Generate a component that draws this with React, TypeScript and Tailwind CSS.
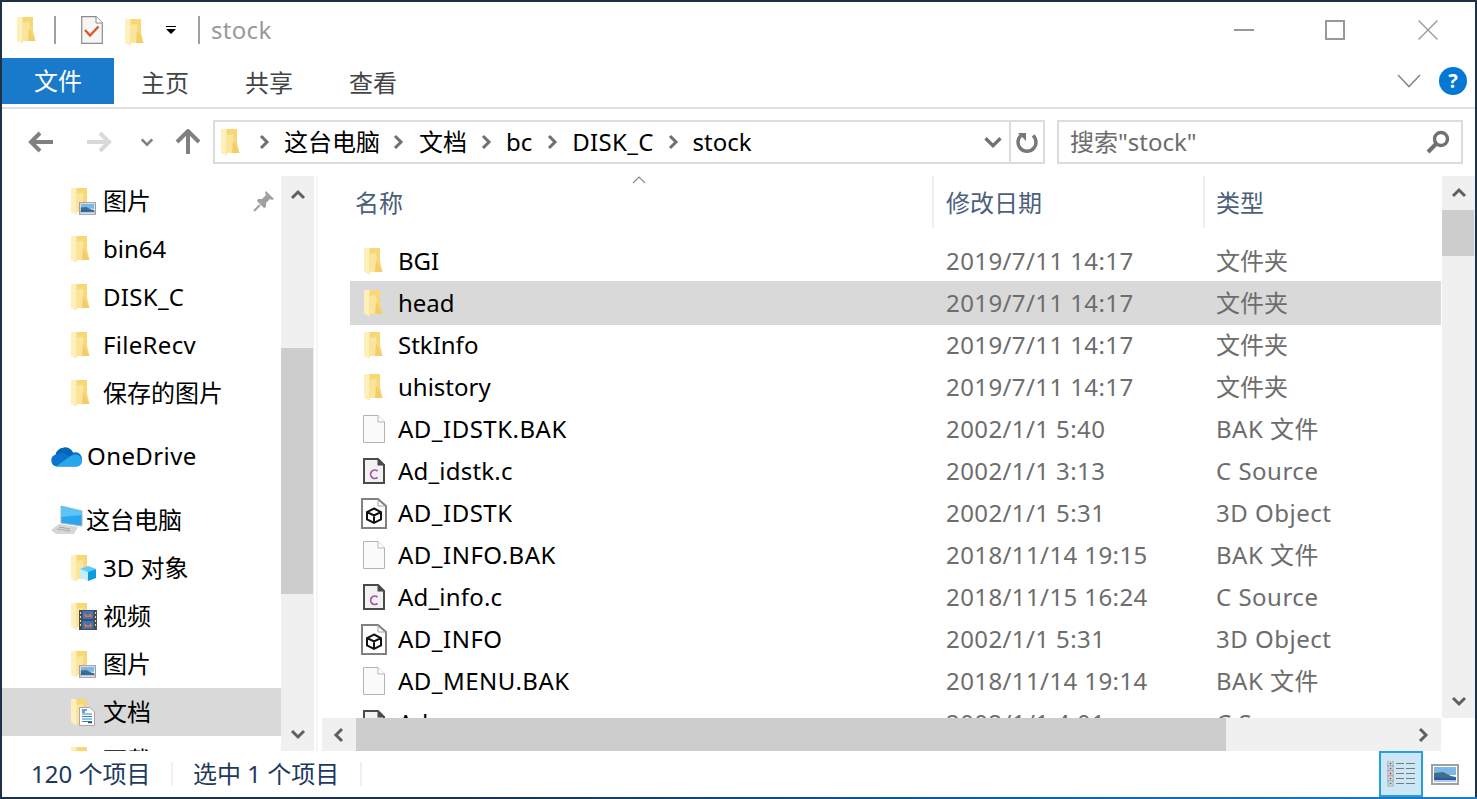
import React from "react";

const F = "[font-family:'Noto_Sans','Noto_Sans_CJK_SC',sans-serif]";

function Folder({ className = "" }: { className?: string }) {
  return (
    <svg width="19" height="28" viewBox="0 0 19 28" className={`shrink-0 ${className}`}>
      <path d="M0 1 H16 V14 L18.5 25 H6 V27.5 L0 24.5 Z" fill="#f8d876" />
      <path d="M0 1 H5.5 L5.5 25 L6 27.5 L0 24.5 Z" fill="#fdf0bd" />
      <path d="M5.5 7 L12 6 L15 25 H5.5 Z" fill="#fbe59d" />
      <path d="M12 12 L18.5 25 H11 Z" fill="#f4cd68" />
    </svg>
  );
}

function Chev({ dir, color = "#606060", w = 16, sw = 3 }: { dir: "up" | "down" | "left" | "right"; color?: string; w?: number; sw?: number }) {
  const d = {
    up: "M2 11 L8 5 L14 11",
    down: "M2 5 L8 11 L14 5",
    left: "M11 2 L5 8 L11 14",
    right: "M5 2 L11 8 L5 14",
  }[dir];
  return (
    <svg width={w} height={w} viewBox="0 0 16 16" className="shrink-0">
      <path d={d} fill="none" stroke={color} strokeWidth={sw} />
    </svg>
  );
}

function Landscape({ w = 17, h = 13 }: { w?: number; h?: number }) {
  return (
    <svg width={w} height={h} viewBox="0 0 28 21">
      <rect x="1" y="1" width="26" height="19" fill="#fff" stroke="#a0a0a0" strokeWidth="2" />
      <rect x="3" y="3" width="22" height="8" fill="#7db7e8" />
      <path d="M3 9 L12 8 L20 12 L25 13 V18 H3 Z" fill="#3f6f88" />
      <path d="M3 13 L14 14 L25 14 V18 H3 Z" fill="#2c5a9c" />
      <path d="M3 16 H25 V18 H3 Z" fill="#a9cdea" />
    </svg>
  );
}

function OverlayFolder({ kind }: { kind: "pic" | "3d" | "video" | "doc" }) {
  return (
    <div className="relative w-[32px] h-[28px] shrink-0">
      <Folder />
      <div className="absolute left-[8px] bottom-0">
        {kind === "pic" && <Landscape />}
        {kind === "3d" && (
          <svg width="18" height="17" viewBox="0 0 18 17">
            <path d="M9 1 L17 4 L17 13 L9 16 L1 13 L1 4 Z" fill="#c7ecfa" />
            <path d="M9 1 L17 4 L9 7 L1 4 Z" fill="#5ccdf4" />
            <path d="M9 7 L17 4 V13 L9 16 Z" fill="#0f9be0" />
          </svg>
        )}
        {kind === "video" && (
          <svg width="18" height="20" viewBox="0 0 18 20">
            <rect width="18" height="20" fill="#4b4b4b" />
            <rect x="3.5" y="1" width="11" height="8" fill="#3b74c4" />
            <rect x="3.5" y="11" width="11" height="8" fill="#3b74c4" />
            <path d="M5 3 L9 6 L12 3 L13 7 H6 Z M5 13 L9 16 L12 13 L13 17 H6 Z" fill="#e0782c" />
            <path d="M1 2h1v2H1zM1 6h1v2H1zM1 10h1v2H1zM1 14h1v2H1zM16 2h1v2h-1zM16 6h1v2h-1zM16 10h1v2h-1zM16 14h1v2h-1z" fill="#ddd" />
          </svg>
        )}
        {kind === "doc" && (
          <svg width="16" height="19" viewBox="0 0 16 19">
            <path d="M.5 .5 H11 L15.5 5 V18.5 H.5 Z" fill="#fff" stroke="#a8a8a8" />
            <path d="M3 7h10M3 9.5h10M3 12h10M3 14.5h10" stroke="#2f86c8" strokeWidth="1.2" />
            <path d="M3 3h5M3 5h3" stroke="#2f86c8" strokeWidth="1.4" />
            <path d="M9 15.5h4" stroke="#444" strokeWidth="1.4" />
          </svg>
        )}
      </div>
    </div>
  );
}

function NavRow({ icon, text, selected, tracking = "" }: { icon: React.ReactNode; text: string; selected?: boolean; tracking?: string }) {
  return (
    <div className={`h-[48px] shrink-0 flex items-center pl-[69px] ${selected ? "bg-[#d9d9d9]" : ""}`}>
      {icon}
      <span className={`text-black whitespace-nowrap ${tracking}`}>{text}</span>
    </div>
  );
}

function BlankDoc() {
  return (
    <svg width="26" height="28" viewBox="0 0 26 28" className="shrink-0">
      <path d="M2.5 .5 H17 L23.5 7 V27.5 H2.5 Z" fill="#fafafa" stroke="#b4b4b4" />
      <path d="M17 .5 V7 H23.5" fill="#fff" stroke="#b4b4b4" />
    </svg>
  );
}

function CDoc() {
  return (
    <svg width="26" height="28" viewBox="0 0 26 28" className="shrink-0">
      <path d="M3 2 H17 L23 8 V26 H3 Z" fill="#f2f2f2" stroke="#4a4a4a" strokeWidth="2" />
      <path d="M16.5 1 V8.5 H24 Z" fill="#4a4a4a" />
      <path d="M16.5 14 A4.2 4.2 0 1 0 16.5 20.5" fill="none" stroke="#a9509f" strokeWidth="1.7" />
    </svg>
  );
}

function ObjDoc() {
  return (
    <svg width="26" height="31" viewBox="0 0 26 31" className="shrink-0">
      <path d="M1 1 H17 L25 8 V30 H1 Z" fill="#fff" stroke="#808080" strokeWidth="2" />
      <path d="M17 1 V8 H25" fill="none" stroke="#a0a0a0" strokeWidth="1" />
      <path d="M13 10.5 L20 14 V21.5 L13 25 L6 21.5 V14 Z M6 14 L13 17.5 L20 14 M13 17.5 V25" fill="none" stroke="#111" strokeWidth="2" />
    </svg>
  );
}

type K = "folder" | "blank" | "c" | "obj";

const rows: [string, string, string, K][] = [
  ["BGI", "2019/7/11 14:17", "文件夹", "folder"],
  ["head", "2019/7/11 14:17", "文件夹", "folder"],
  ["StkInfo", "2019/7/11 14:17", "文件夹", "folder"],
  ["uhistory", "2019/7/11 14:17", "文件夹", "folder"],
  ["AD_IDSTK.BAK", "2002/1/1 5:40", "BAK 文件", "blank"],
  ["Ad_idstk.c", "2002/1/1 3:13", "C Source", "c"],
  ["AD_IDSTK", "2002/1/1 5:31", "3D Object", "obj"],
  ["AD_INFO.BAK", "2018/11/14 19:15", "BAK 文件", "blank"],
  ["Ad_info.c", "2018/11/15 16:24", "C Source", "c"],
  ["AD_INFO", "2002/1/1 5:31", "3D Object", "obj"],
  ["AD_MENU.BAK", "2018/11/14 19:14", "BAK 文件", "blank"],
  ["Ad_menu.c", "2002/1/1 4:01", "C Source", "c"],
];

function FileRow({ name, date, type, kind, selected }: { name: string; date: string; type: string; kind: K; selected?: boolean }) {
  const nameTrack = name.startsWith("AD_") ? "tracking-[0.5px]" : name.startsWith("Ad_") ? "tracking-[0.2px]" : "";
  return (
    <div className={`flex items-center shrink-0 ml-[28px] mr-px ${selected ? "h-[44px] -my-px bg-[#d9d9d9]" : "h-[42px]"}`}>
      <div className={`w-[48px] flex justify-center shrink-0 ${kind === "folder" ? "pr-[2px]" : ""}`}>
        {kind === "folder" && <Folder />}
        {kind === "blank" && <BlankDoc />}
        {kind === "c" && <CDoc />}
        {kind === "obj" && <ObjDoc />}
      </div>
      <div className={`w-[548px] text-black whitespace-nowrap ${nameTrack}`}>{name}</div>
      <div className="w-[270px] text-[#6d6d6d] whitespace-nowrap tracking-[0.4px]">{date}</div>
      <div className={`text-[#6d6d6d] whitespace-nowrap ${kind === "folder" ? "" : "tracking-[0.5px]"}`}>{type}</div>
    </div>
  );
}

function Crumb({ children, ml = "ml-[12px]", chevMl = "ml-[11px]", tracking = "" }: { children: React.ReactNode; ml?: string; chevMl?: string; tracking?: string }) {
  return (
    <>
      <div className={`shrink-0 ${chevMl}`}><Chev dir="right" color="#707070" w={16} sw={3} /></div>
      <span className={`text-black ${ml} ${tracking}`}>{children}</span>
    </>
  );
}

export default function App() {
  return (
    <div className={`w-[1477px] h-[799px] overflow-hidden bg-[#1c3146] pt-[2px] px-[2px] text-[24px] leading-[32px] ${F}`}>
      <div className="w-[1473px] h-[795px] bg-white flex flex-col overflow-hidden">
        {/* title bar */}
        <div className="h-[56px] shrink-0 flex items-center pl-[15px]">
          <Folder />
          <div className="w-[2px] h-[28px] bg-[#a0a0a0] ml-[18px]" />
          <svg width="22" height="28" viewBox="0 0 22 28" className="ml-[25px] shrink-0">
            <path d="M.7 .7 H15 L21.3 7 V27.3 H.7 Z" fill="#f6f6f6" stroke="#8c8c8c" strokeWidth="1.2" />
            <path d="M15 .7 V7 H21.3" fill="#fff" stroke="#8c8c8c" />
            <path d="M4 14 L9 19.5 L17.5 10.5" fill="none" stroke="#d9592a" strokeWidth="2.4" />
          </svg>
          <Folder className="ml-[22px] mt-[4px]" />
          <svg width="12" height="12" viewBox="0 0 12 12" className="ml-[21px] shrink-0">
            <path d="M1 2 H11 V3 H1 Z M1 5 H11 L6 10 Z" fill="#000" />
          </svg>
          <div className="w-[2px] h-[28px] bg-[#a0a0a0] ml-[21px]" />
          <span className="text-[#999999] ml-[11px] tracking-[0.3px] -mt-px">stock</span>
          <div className="ml-auto flex items-center pr-[37px]">
            <div className="w-[20px] h-[2px] bg-[#999999]" />
            <div className="w-[20px] h-[20px] border-2 border-[#999999] ml-[71px]" />
            <svg width="20" height="20" viewBox="0 0 20 20" className="ml-[73px]">
              <path d="M.5 .5 L19.5 19.5 M19.5 .5 L.5 19.5" stroke="#999999" strokeWidth="1.4" />
            </svg>
          </div>
        </div>

        {/* ribbon tabs */}
        <div className="h-[51px] shrink-0 border-b-2 border-[#e0e0e0] flex items-start">
          <div className="w-[112px] h-[46px] bg-[#1979ca] text-white flex items-center justify-center shrink-0 mr-[-1px]">文件</div>
          <div className="w-[104px] h-[50px] flex items-center justify-center text-[#444444] shrink-0">主页</div>
          <div className="w-[104px] h-[50px] flex items-center justify-center text-[#444444] shrink-0">共享</div>
          <div className="w-[104px] h-[50px] flex items-center justify-center text-[#444444] shrink-0">查看</div>
          <div className="ml-auto flex items-center h-[46px] pr-[8px]">
            <svg width="24" height="14" viewBox="0 0 24 14">
              <path d="M1 1 L12 12.5 L23 1" fill="none" stroke="#8a8a8a" strokeWidth="1.6" />
            </svg>
            <div className="w-[28px] h-[28px] rounded-full bg-[#0478d4] text-white flex items-center justify-center ml-[18px] text-[20px] font-bold">?</div>
          </div>
        </div>

        {/* address row */}
        <div className="h-[67px] shrink-0 flex items-center pb-[2px]">
          <svg width="26" height="24" viewBox="0 0 26 24" className="ml-[26px] shrink-0">
            <path d="M12 3 L3 12 L12 21 M3 12 H25" fill="none" stroke="#808080" strokeWidth="4" />
          </svg>
          <svg width="26" height="24" viewBox="0 0 26 24" className="ml-[32px] shrink-0">
            <path d="M14 3 L23 12 L14 21 M23 12 H1" fill="none" stroke="#d9d9d9" strokeWidth="4" />
          </svg>
          <div className="ml-[28px] shrink-0"><Chev dir="down" color="#808080" w={14} sw={3} /></div>
          <svg width="26" height="26" viewBox="0 0 26 26" className="ml-[21px] shrink-0">
            <path d="M2 13 L13 2 L24 13 M13 3 V25" fill="none" stroke="#808080" strokeWidth="4" />
          </svg>
          <div className="ml-[12px] w-[832px] h-[44px] border-2 border-[#dcdcdc] flex items-center shrink-0">
            <Folder className="ml-[6px]" />
            <Crumb chevMl="ml-[16px]">这台电脑</Crumb>
            <Crumb chevMl="ml-[10px]" ml="ml-[13px]">文档</Crumb>
            <Crumb>bc</Crumb>
            <Crumb chevMl="ml-[12px]" tracking="tracking-[0.3px]">DISK_C</Crumb>
            <Crumb>stock</Crumb>
            <div className="ml-auto flex items-center h-full">
              <Chev dir="down" color="#707070" w={20} sw={2.6} />
              <div className="w-[2px] h-full bg-[#dcdcdc] ml-[6px]" />
              <svg width="24" height="24" viewBox="0 0 24 24" className="mx-[4px]">
                <path d="M6 5.5 A9 9 0 1 0 18 5.5" fill="none" stroke="#777777" strokeWidth="3.4" />
                <path d="M3 3 H11 V11 Z" fill="#777777" />
              </svg>
            </div>
          </div>
          <div className="ml-[12px] w-[406px] h-[44px] border-2 border-[#dcdcdc] flex items-center pl-[11px] pr-[11px] shrink-0">
            <span className="text-[#6d6d6d]">搜索"stock"</span>
            <svg width="24" height="24" viewBox="0 0 24 24" className="ml-auto">
              <circle cx="15" cy="9" r="6.5" fill="none" stroke="#707070" strokeWidth="3.4" />
              <path d="M10 14 L2 22" stroke="#707070" strokeWidth="4" />
            </svg>
          </div>
        </div>

        {/* main */}
        <div className="h-[575px] shrink-0 flex">
          {/* nav */}
          <div className="w-[279px] shrink-0 flex flex-col overflow-hidden pt-px">
            <div className="flex flex-col">
              <div className="h-[48px] shrink-0 flex items-center pl-[69px]">
                <OverlayFolder kind="pic" />
                <span className="text-black">图片</span>
                <svg width="22" height="22" viewBox="0 0 22 22" className="ml-auto mr-[6px]">
                  <path d="M13 1 L21 9 L19 10 L17 9 L13 13 L13 17 L11 18 L4 11 L5 9 L9 9 L13 5 L12 3 Z" fill="#a0a0a0" />
                  <path d="M7 15 L1 21" stroke="#a0a0a0" strokeWidth="2" />
                </svg>
              </div>
              <NavRow icon={<div className="w-[32px] shrink-0"><Folder /></div>} text="bin64" />
              <NavRow icon={<div className="w-[32px] shrink-0"><Folder /></div>} text="DISK_C" tracking="tracking-[0.3px]" />
              <NavRow icon={<div className="w-[32px] shrink-0"><Folder /></div>} text="FileRecv" tracking="tracking-[0.3px]" />
              <NavRow icon={<div className="w-[32px] shrink-0"><Folder /></div>} text="保存的图片" />
            </div>
            <div className="h-[15px] shrink-0" />
            <div className="h-[48px] shrink-0 flex items-center pl-[48px]">
              <svg width="33" height="22" viewBox="0 0 33 22" className="shrink-0 mr-[4px]">
                <path d="M7 21.5 A6 6 0 0 1 5.5 9.8 A9.5 9.5 0 0 1 23 7.5 A7 7 0 0 1 32 15 A6.5 6.5 0 0 1 27 21.5 Z" fill="#0a74cf" />
                <path d="M5.5 9.8 A9.5 9.5 0 0 1 23 7.5 L20 11.5 L12 7.5 Z" fill="#0364b8" />
                <path d="M6 21.5 L17 13.5 L21 11 A7 7 0 0 1 32 15 A6.5 6.5 0 0 1 27 21.5 Z" fill="#28a8ea" />
              </svg>
              <span className="text-black tracking-[0.4px]">OneDrive</span>
            </div>
            <div className="h-[16px] shrink-0" />
            <div className="h-[48px] shrink-0 flex items-center pl-[48px]">
              <svg width="34" height="30" viewBox="0 0 34 30" className="shrink-0 mr-[2px]">
                <path d="M11 1 L32 6 V21 L11 18 Z" fill="#2aa6ee" stroke="#a6b4be" />
                <path d="M11 1 L32 6 L32 10 L11 12 Z" fill="#5cc4f6" />
                <path d="M1 25 L9 19 L28 22 L24 29 L6 29 Z" fill="#d4d6d8" />
                <path d="M9 22 L20 24 M7 24 L20 26" stroke="#a6a8aa" />
              </svg>
              <span className="text-black">这台电脑</span>
            </div>
            <NavRow icon={<OverlayFolder kind="3d" />} text="3D 对象" />
            <NavRow icon={<OverlayFolder kind="video" />} text="视频" />
            <NavRow icon={<OverlayFolder kind="pic" />} text="图片" />
            <NavRow icon={<OverlayFolder kind="doc" />} text="文档" selected />
            <NavRow icon={<OverlayFolder kind="pic" />} text="下载" />
          </div>

          {/* nav scrollbar */}
          <div className="w-[33px] shrink-0 bg-[#f0f0f0] flex flex-col items-center">
            <div className="h-[172px] w-full flex items-start justify-center pt-[11px] shrink-0"><Chev dir="up" /></div>
            <div className="h-[246px] w-[32px] self-start bg-[#cdcdcd] shrink-0" />
            <div className="flex-1 w-full flex items-end justify-center pb-[9px]"><Chev dir="down" /></div>
          </div>

          {/* gutter */}
          <div className="w-[8px] shrink-0 pl-[2px]">
            <div className="w-[2px] h-full bg-[#f6f6f6]" />
          </div>

          {/* list */}
          <div className="w-[1153px] shrink-0 flex flex-col">
            <div className="h-[542px] shrink-0 flex">
              <div className="w-[1120px] shrink-0 flex flex-col overflow-hidden relative">
                <svg width="14" height="8" viewBox="0 0 14 8" className="absolute left-[310px] top-0">
                  <path d="M1 7 L7 1 L13 7" fill="none" stroke="#8a8a8a" strokeWidth="1.2" />
                </svg>
                <div className="h-[64px] shrink-0 flex text-[#4c607a]">
                  <div className="w-[612px] h-[52px] border-r-2 border-[#eeeeee] pl-[33px] flex items-center pt-[2px] shrink-0">名称</div>
                  <div className="w-[271px] h-[52px] border-r-2 border-[#eeeeee] pl-[12px] flex items-center pt-[2px] shrink-0">修改日期</div>
                  <div className="pl-[11px] h-[52px] flex items-center pt-[2px]">类型</div>
                </div>
                {rows.map(([n, d, t, k]) => (
                  <FileRow key={n} name={n} date={d} type={t} kind={k} selected={n === "head"} />
                ))}
              </div>
              <div className="w-[33px] shrink-0 bg-[#f0f0f0] flex flex-col">
                <div className="h-[34px] shrink-0 flex items-center justify-center"><Chev dir="up" /></div>
                <div className="h-[46px] w-[32px] bg-[#cdcdcd] shrink-0" />
                <div className="flex-1 flex items-end justify-center pb-[9px]"><Chev dir="down" /></div>
              </div>
            </div>
            <div className="h-[33px] w-[1119px] shrink-0 bg-[#f0f0f0] flex">
              <div className="w-[34px] shrink-0 flex items-center justify-center"><Chev dir="left" /></div>
              <div className="w-[870px] h-full bg-[#cdcdcd] shrink-0" />
              <div className="flex-1 flex items-center justify-end pr-[10px]"><Chev dir="right" /></div>
            </div>
          </div>
        </div>

        {/* status bar */}
        <div className="h-[46px] shrink-0 flex items-center text-[#1e395b] pl-[29px]">
          <span className="whitespace-nowrap w-[140px] shrink-0">120 个项目</span>
          <div className="w-[2px] h-[24px] bg-[#f0f0f0] shrink-0" />
          <span className="whitespace-nowrap w-[187px] pl-[20px] shrink-0">选中 1 个项目</span>
          <div className="w-[2px] h-[24px] bg-[#f0f0f0] shrink-0" />
          <div className="ml-auto flex items-center h-full">
            <div className="w-[44px] h-full bg-[#cce8f7] border-2 border-[#26a0da] flex items-center justify-center">
              <svg width="28" height="26" viewBox="0 0 28 26">
                {[1, 6, 11, 16, 21].map((y, i) => (
                  <g key={y}>
                    <rect x="1" y={y - 1} width="5" height="5" fill="#fff" stroke="#9a9a9a" />
                    <rect x="2.5" y={y + 0.5} width="2" height="2" fill={i === 2 ? "#b03a10" : "#3f6f88"} />
                    <path d={`M9 ${y + 1.5}h8M19 ${y + 1.5}h9`} stroke="#7a7a7a" strokeWidth="1.2" />
                  </g>
                ))}
              </svg>
            </div>
            <div className="ml-[8px] mr-[16px]"><Landscape w={28} h={21} /></div>
          </div>
        </div>
      </div>
      {/* bottom window edge */}
      <div className="h-[2px] -mx-[2px] bg-[linear-gradient(to_right,#1c3146_0%,#1c3146_30%,#0f5a9c_65%,#1a7fcb_100%)]" />
    </div>
  );
}
